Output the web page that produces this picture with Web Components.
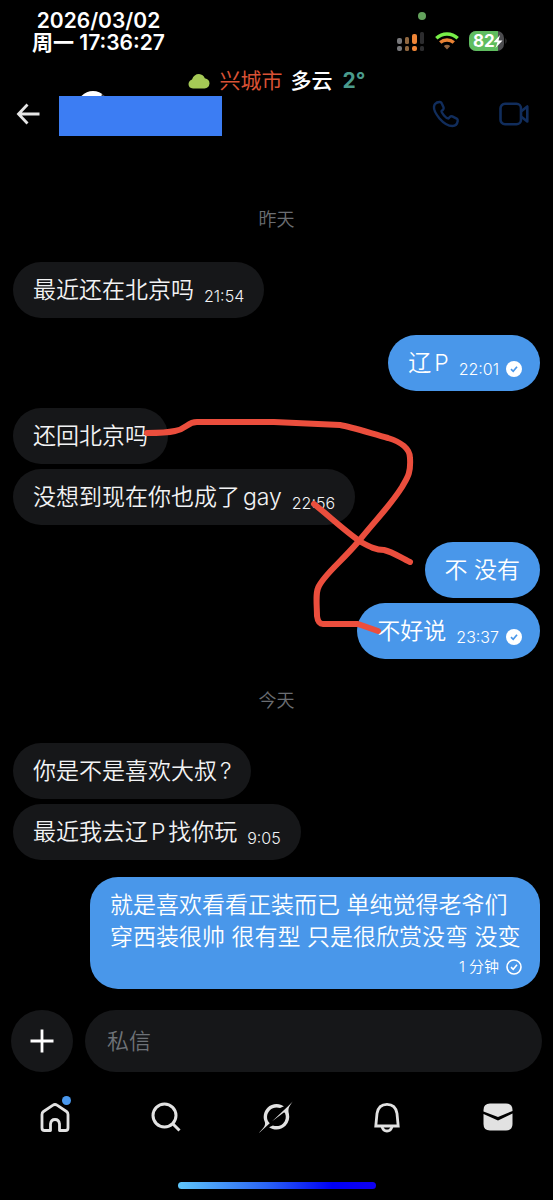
<!DOCTYPE html>
<html lang="zh-CN">
<head>
<meta charset="utf-8">
<meta name="viewport" content="width=device-width, initial-scale=1">
<title>私信</title>
<style>
  html, body { margin: 0; background: #000; }
  body { font-family: Inter, "Noto Sans CJK SC", sans-serif; color: #f2f3f4; text-autospace: normal; }
</style>
</head>
<body>
<chat-app></chat-app>

<script>
const define = (name, html) => {
  const t = document.createElement('template');
  t.innerHTML = html;
  customElements.define(name, class extends HTMLElement {
    constructor() {
      super();
      this.attachShadow({ mode: 'open' }).append(t.content.cloneNode(true));
    }
  });
};

define('status-bar', `
<style>
  :host { display: flex; justify-content: space-between; padding: 10px 46px 0 32px; height: 55px; box-sizing: border-box; }
  .clock { font-size: 21px; line-height: 22px; font-weight: 600; text-align: center; color: #fff; white-space: nowrap; }
  .clock div { height: 22px; }
  .icons { display: flex; align-items: center; gap: 10px; height: 20px; padding-top: 21px; position: relative; }
  .dot { position: absolute; left: 21px; top: 2px; width: 8px; height: 8px; border-radius: 50%; background: #63a25c; }
  svg { display: block; }
  .battery { position: relative; width: 38px; height: 20px; }
  .battery b { position: absolute; left: 4px; top: 0; font-size: 17px; line-height: 20px; font-weight: 700; color: #fff; }
  .battery svg { position: absolute; inset: 0; }
</style>
<div class="clock"><div>2026/03/02</div><div>周一 17:36:27</div></div>
<div class="icons">
  <span class="dot"></span>
  <svg width="28" height="20" viewBox="0 0 28 20">
    <g fill="#77777a"><rect y="7" width="5" height="6" rx="2"/><rect y="15" width="5" height="5" rx="2"/></g>
    <g fill="#8f6740"><rect x="8" y="6" width="4" height="7" rx="1.5"/><rect x="8" y="15" width="4" height="5" rx="1.5"/></g>
    <g fill="#ef8537"><rect x="15" y="3" width="5" height="10" rx="2"/><rect x="15" y="15" width="5" height="5" rx="2"/></g>
    <g fill="#2c2c2e"><rect x="23" y="1" width="4" height="12" rx="1.5"/><rect x="23" y="15" width="4" height="5" rx="1.5"/></g>
  </svg>
  <svg width="24" height="20" viewBox="0 0 24 20" fill="none" stroke-width="3.4">
    <path d="M1.3 7.2A15.6 15.6 0 0 1 22.700 7.200" stroke="#78ee48"/>
    <path d="M5.200 11.600A10 10 0 0 1 18.800 11.600" stroke="#e98335"/>
    <path d="M8.800 15Q12 12.600 15.200 15L12 18.600Z" fill="#95653f"/>
  </svg>
  <div class="battery">
    <svg width="38" height="20" viewBox="0 0 38 20">
      <defs><clipPath id="c"><rect width="35" height="20" rx="7"/></clipPath></defs>
      <g clip-path="url(#c)"><rect width="35" height="20" fill="#4c4c4f"/><rect width="29" height="20" fill="#5fbd60"/></g>
      <path d="M36.500 7q2 3 0 6z" fill="#444"/>
    </svg>
    <b>82</b>
    <svg width="38" height="20" viewBox="0 0 38 20"><path d="M31 4L24.500 11.200h4L26.500 17l7-7.500h-4z" fill="#fff"/></svg>
  </div>
</div>`);

define('weather-line', `
<style>
  :host { display: flex; justify-content: center; align-items: center; gap: 8px; height: 30px; padding-top: 11px; box-sizing: content-box; font-size: 21px; line-height: 30px; font-weight: 500; }
  svg { width: 22px; height: 16px; }
  .city { color: #d95235; font-weight: 400; margin-left: 2px; }
  .sky { color: #fff; }
  .temp { color: #4a9b8c; font-weight: 700; margin-left: 2px; }
</style>
<svg viewBox="0 0 22 16" fill="#a5c956"><path d="M5 15.500Q0.500 15 .5 11Q.8 7.600 4 6.500Q6 1 11 1Q15.300 1.400 16.800 5.200Q21.500 6 21.500 10.500Q21 15 16.500 15.500Z"/></svg>
<span class="city">兴城市</span><span class="sky">多云</span><span class="temp">2°</span>`);

define('chat-header', `
<style>
  :host { display: flex; align-items: flex-start; height: 40px; padding: 0 26px 0 14px; }
  button { all: unset; display: grid; place-items: center; width: 28px; height: 36px; cursor: pointer; }
  .who { position: relative; width: 163px; height: 40px; margin-left: 17px; }
  .avatar { position: absolute; left: 18px; top: -5px; width: 32px; height: 32px; border-radius: 50%; background: linear-gradient(110deg, #fff 58%, #3b3838 62%, #c9c9c9 74%); }
  .name { position: absolute; inset: 0; background: #3c7df3; }
  .actions { margin-left: auto; display: flex; gap: 39px; color: #112d5c; }
  svg { display: block; fill: none; stroke: currentColor; }
</style>
<button aria-label="返回"><svg width="24" height="22" viewBox="0 0 24 22" stroke-width="2.800" style="color:#e5e5e5"><path d="M11.500 1.500L2.500 11l9 9.500M2.500 11H23.500"/></svg></button>
<div class="who"><div class="avatar"></div><div class="name"></div></div>
<div class="actions">
  <button aria-label="语音通话"><svg width="28" height="28" viewBox="0 0 28 28" stroke-width="2.400" stroke-linejoin="round"><path d="M3 4Q5 1.800 8 2Q9.300 2.200 9.800 3.500L11.600 7.500Q12 9 10.800 10L9.500 11.200Q9.500 12.500 12 15.500Q14.500 18.500 16.500 18.500L18 16.800Q19 15.800 20.300 16.400L24.700 18.600Q26 19.400 25.700 21Q25 25.800 20.500 26Q14 26 7.500 18.500Q1.500 11 2 7Q2.200 5 3 4Z"/></svg></button>
  <button aria-label="视频通话"><svg width="30" height="24" viewBox="0 0 30 24" stroke-width="2.600" stroke-linejoin="round"><rect x="1.500" y="1.800" width="20.500" height="20.400" rx="4.500"/><path d="M22 9.500L28.300 4.500V19.500L22 14.500"/></svg></button>
</div>`);

define('day-label', `
<style>
  :host { display: block; text-align: center; font-size: 18px; line-height: 24px; color: #6a6d72; margin: 30px 0; font-weight: 350; }
</style><slot></slot>`);

/* A chat bubble. Attributes: "out" for own messages, "time", "state" (sent | seen), "long", "near" for a follow-up. */
customElements.define('chat-bubble', class extends HTMLElement {
  constructor() {
    super();
    const time = this.getAttribute('time');
    const state = this.getAttribute('state');
    const check = state === 'seen'
      ? '<svg viewBox="0 0 16 16"><circle cx="8" cy="8" r="8" fill="#fff"/><path d="M5 8.200L7.200 10.300L11 5.800" stroke="#4997ea" stroke-width="1.700" fill="none"/></svg>'
      : state === 'sent'
      ? '<svg viewBox="0 0 16 16" fill="none" stroke="#fff" stroke-width="1.600"><circle cx="8" cy="8" r="7"/><path d="M5 8.200L7.200 10.300L11 5.800"/></svg>' : '';
    this.attachShadow({ mode: 'open' }).innerHTML = `
<style>
  :host { display: flex; margin-top: 17px; }
  :host([near]) { margin-top: 5px; }
  :host([first]) { margin-top: 0; }
  :host([out]) { justify-content: flex-end; }
  .bubble { display: flex; align-items: flex-end; column-gap: 10px; padding: 12px 20px; border-radius: 28px; background: #161719; max-width: min(450px, 86%); box-sizing: border-box; }
  :host([out]) .bubble { background: #4997ea; color: #fff; }
  :host([state]) .bubble { padding-right: 18px; }
  :host([long]) .bubble { flex-direction: column; row-gap: 4px; }
  .text { font-size: 23px; line-height: 32px; font-weight: 350; }
  :host(:not([long])) .text { white-space: nowrap; }
  .meta { display: flex; align-items: center; gap: 7px; font-size: 16px; line-height: 20px; font-weight: 350; white-space: nowrap; }
  :host([long]) .meta { font-size: 15px; }
  svg { width: 16px; height: 16px; }
</style>
<div class="bubble"><div class="text"><slot></slot></div>${time ? `<div class="meta"><time>${time}</time>${check}</div>` : ''}</div>`;
  }
});

define('ink-marks', `
<style>
  :host { position: absolute; left: 0; top: 0; width: 100%; pointer-events: none; }
  svg { display: block; width: 100%; }
</style>
<svg viewBox="0 136 553 864" fill="none" stroke="#eb4e3d" stroke-width="6" stroke-linecap="round" stroke-linejoin="round">
  <path d="M147 433C157 433 166 433 175 431C187 429 187 422 197 422H274C295 423 319 424 340 425C352 427 373 434 388 438C401 442 410 449 410 458C411 474 407 478 402 487C390 506 379 516 358 542C340 563 325 574 319 586C315 592 317 606 317 616Q318 624 323 624H358L378 631"/>
  <path d="M314 504C328 515 346 532 361 542C370 547 376 550 384 550C393 552 401 558 410 562"/>
</svg>`);

define('message-thread', `
<style>
  :host { display: block; position: relative; padding: 72px 13px 21px; }
  day-label.top { margin-top: 0; }
</style>
<day-label class="top">昨天</day-label>
<chat-bubble first time="21:54">最近还在北京吗</chat-bubble>
<chat-bubble out time="22:01" state="seen">辽P</chat-bubble>
<chat-bubble>还回北京吗</chat-bubble>
<chat-bubble near time="22:56">没想到现在你也成了gay</chat-bubble>
<chat-bubble out>不 没有</chat-bubble>
<chat-bubble out near time="23:37" state="seen">不好说</chat-bubble>
<day-label>今天</day-label>
<chat-bubble first>你是不是喜欢大叔?</chat-bubble>
<chat-bubble near time="9:05">最近我去辽P找你玩</chat-bubble>
<chat-bubble out long time="1 分钟" state="sent">就是喜欢看看正装而已 单纯觉得老爷们穿西装很帅 很有型 只是很欣赏没弯 没变</chat-bubble>
<ink-marks></ink-marks>`);

define('message-composer', `
<style>
  :host { display: flex; gap: 12px; padding: 0 11px; }
  button { flex: none; border: 0; padding: 0; width: 62px; height: 62px; border-radius: 50%; background: #161719; display: grid; place-items: center; }
  input { flex: 1; min-width: 0; height: 62px; box-sizing: border-box; border: 0; outline: 0; border-radius: 31px; background: #161719; padding: 0 22px; color: #fff; font: 350 22px Inter, "Noto Sans CJK SC", sans-serif; }
  input::placeholder { color: #6e7277; opacity: 1; }
</style>
<button aria-label="添加"><svg width="24" height="24" viewBox="0 0 24 24" stroke="#fff" stroke-width="2.800"><path d="M12 .5V23.500M.5 12H23.500"/></svg></button>
<input type="text" placeholder="私信" aria-label="私信">`);

define('tab-bar', `
<style>
  :host { display: block; padding-top: 25px; }
  nav { display: grid; grid-template-columns: repeat(5, 1fr); }
  a { display: grid; place-items: center; height: 40px; color: #e2e2e2; }
  .badge { position: relative; display: block; }
  .badge i { position: absolute; right: 2px; top: -1px; width: 9px; height: 9px; border-radius: 50%; background: #4a98ee; }
  svg { display: block; }
</style>
<nav>
  <a href="#home" aria-label="主页"><span class="badge"><svg width="36" height="40" viewBox="0 0 36 40" fill="none" stroke="currentColor" stroke-width="2.800" stroke-linejoin="round"><path d="M18 7.500Q19 7.500 20 8.200L29.500 14.500Q31 15.600 31 17.500V31Q31 33.500 28.500 33.500H22.500V27Q22 22.500 18 22.500Q14 22.500 13.500 27V33.500H7.500Q5 33.500 5 31V17.500Q5 15.600 6.500 14.500L16 8.200Q17 7.500 18 7.500Z"/></svg><i></i></span></a>
  <a href="#search" aria-label="搜索"><svg width="32" height="32" viewBox="0 0 32 32" fill="none" stroke="currentColor" stroke-width="3"><circle cx="14.500" cy="14.500" r="11.500"/><path d="M22.500 22.500L29.500 29.500"/></svg></a>
  <a href="#grok" aria-label="Grok"><svg width="34" height="34" viewBox="0 0 33 33" fill="currentColor"><path d="M12.745 20.540L23.770 12.395C24.310 11.995 25.080 12.150 25.340 12.775C26.700 16.055 26.090 20 23.390 22.705C20.690 25.405 16.940 26 13.505 24.650L9.760 26.385C15.135 30.065 21.660 29.155 25.735 25.070C28.970 21.835 29.970 17.420 29.035 13.440C27.840 8.290 29.330 6.230 32.385 2.025L33 1.170L28.435 5.740L12.740 20.545"/><path d="M10.465 22.530C6.605 18.840 7.270 13.125 10.565 9.835C13 7.400 16.990 6.405 20.475 7.870L24.215 6.140C23.540 5.650 22.675 5.125 21.685 4.760C17.205 2.915 11.840 3.835 8.195 7.475C4.690 10.985 3.590 16.380 5.480 20.980C6.895 24.420 4.580 26.850 2.250 29.305C1.420 30.175.590 31.050 0 32L10.465 22.530"/></svg></a>
  <a href="#notifications" aria-label="通知"><svg width="32" height="32" viewBox="0 0 32 32" fill="none" stroke="currentColor" stroke-width="2.800"><path d="M4.800 25L6 12.500Q7.500 3.400 16 3.400Q24.500 3.400 26 12.500L27.200 25Z"/><path d="M11 25.500Q12 30 16 30Q20 30 21 25.500"/></svg></a>
  <a href="#messages" aria-label="私信"><svg width="32" height="32" viewBox="0 0 32 32" fill="currentColor"><path d="M1.500 10.500V9Q1.500 2.500 8 2.500H24Q30.500 2.500 30.500 9V10L16 16Z"/><path d="M1.500 13L16 19.500L30.500 12.500V23Q30.500 29.500 24 29.500H8Q1.500 29.500 1.500 23Z"/></svg></a>
</nav>`);

define('home-indicator', `
<style>
  :host { display: block; padding: 45px 0 11px; }
  div { width: 198px; height: 7px; margin: 0 auto; border-radius: 4px; background: linear-gradient(90deg, #5fc6fa, #2a63f4 45%, #0000f5 78%, #1000f0); }
</style><div></div>`);

define('chat-app', `
<style>
  :host { display: flex; flex-direction: column; min-height: 100vh; overflow: hidden; }
</style>
<status-bar></status-bar>
<weather-line></weather-line>
<chat-header></chat-header>
<message-thread></message-thread>
<message-composer></message-composer>
<tab-bar></tab-bar>
<home-indicator></home-indicator>`);
</script>
</body>
</html>
